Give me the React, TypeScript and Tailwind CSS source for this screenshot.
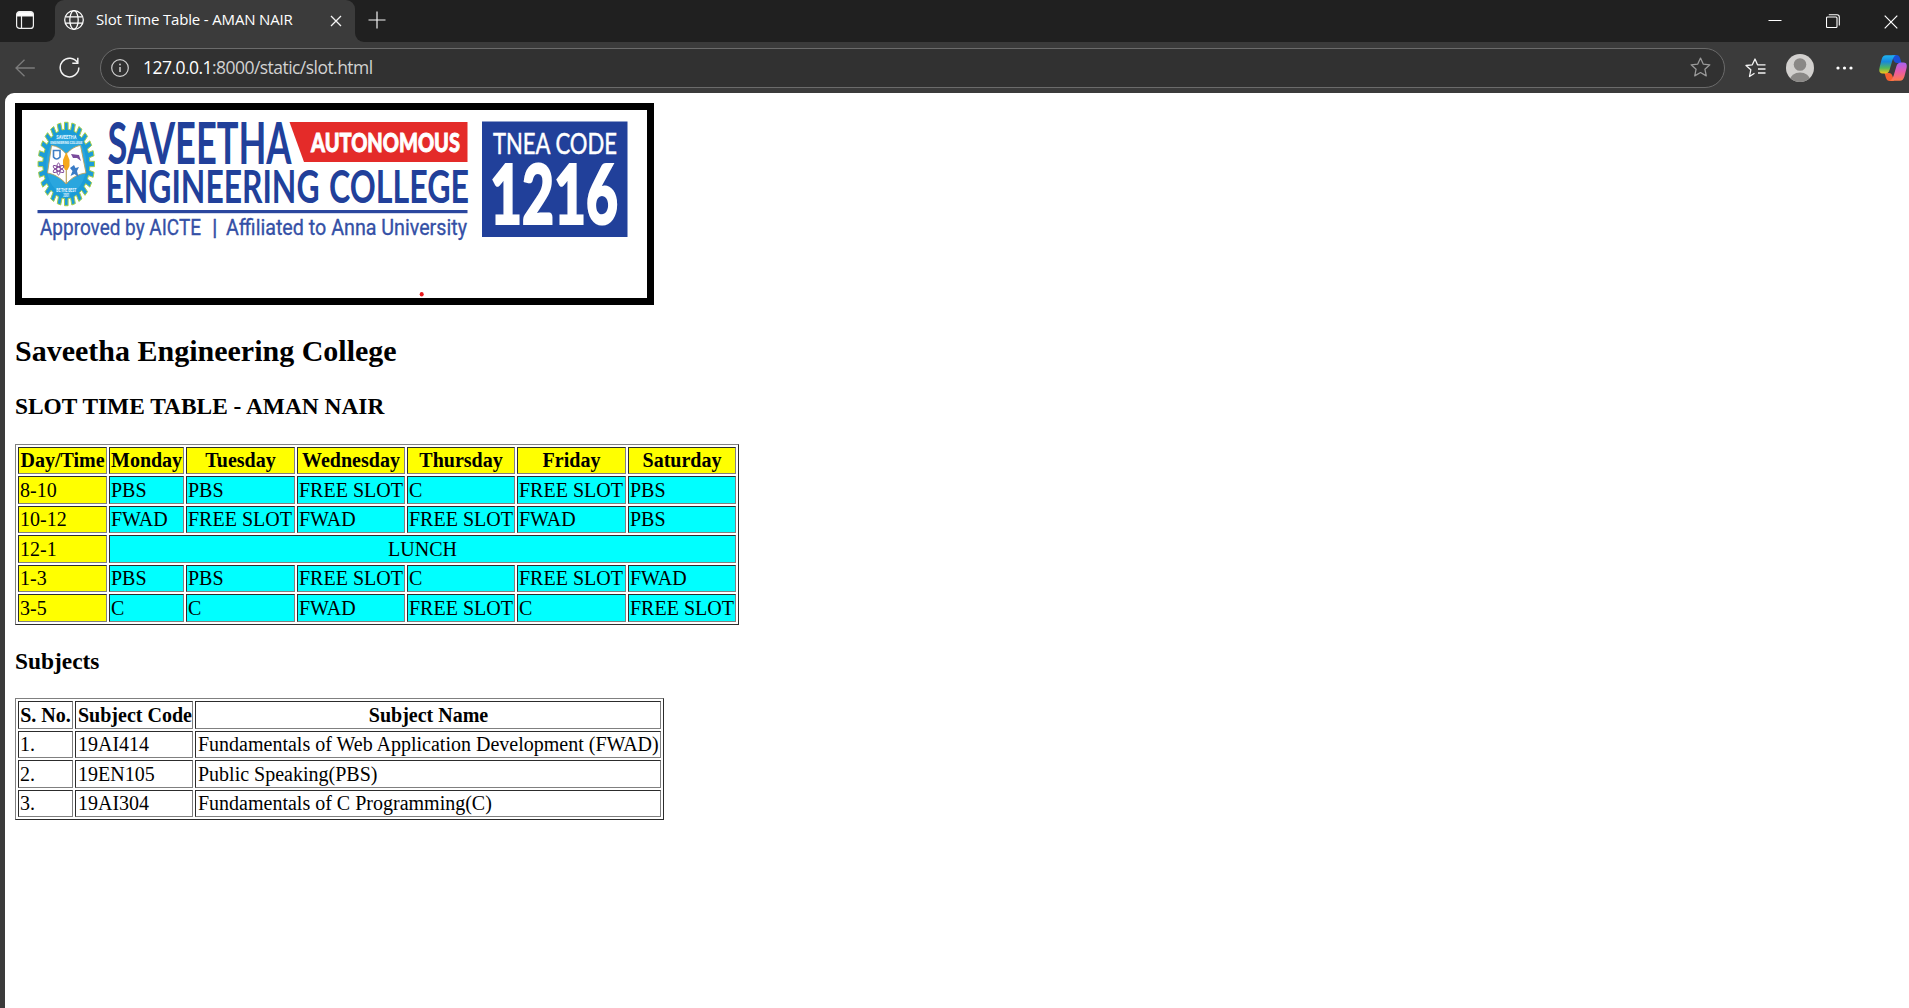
import React from "react";

const SCHEDULE = [
  { time: "8-10", h: "h-[28px]", slots: ["PBS", "PBS", "FREE SLOT", "C", "FREE SLOT", "PBS"] },
  { time: "10-12", h: "h-[27px]", slots: ["FWAD", "FREE SLOT", "FWAD", "FREE SLOT", "FWAD", "PBS"] },
  { time: "12-1", h: "h-[28px]", lunch: true, slots: [] as string[] },
  { time: "1-3", h: "h-[27px]", slots: ["PBS", "PBS", "FREE SLOT", "C", "FREE SLOT", "FWAD"] },
  { time: "3-5", h: "h-[28px]", slots: ["C", "C", "FWAD", "FREE SLOT", "C", "FREE SLOT"] },
];

const DAYS = ["Day/Time", "Monday", "Tuesday", "Wednesday", "Thursday", "Friday", "Saturday"];

const SUBJECTS = [
  { no: "1.", code: "19AI414", name: "Fundamentals of Web Application Development (FWAD)", h: "h-[27px]" },
  { no: "2.", code: "19EN105", name: "Public Speaking(PBS)", h: "h-[28px]" },
  { no: "3.", code: "19AI304", name: "Fundamentals of C Programming(C)", h: "h-[27px]" },
];

const EDGE =
  "border border-t-[#2c2c2c] border-l-[#2c2c2c] border-b-[#808080] border-r-[#808080] py-0 pr-px leading-[25px] whitespace-nowrap";
const CELL = EDGE + " pl-px";
const CELL_WIDE = EDGE + " pl-[2px]";
const TABLE =
  "table-fixed border-separate border-spacing-[2px] border border-t-[#808080] border-l-[#808080] border-b-[#2c2c2c] border-r-[#2c2c2c] text-[20px]";

function gearPath(teeth: number) {
  const pts: string[] = [];
  const step = (Math.PI * 2) / teeth;
  for (let i = 0; i < teeth; i++) {
    const a = i * step - Math.PI / 2;
    const ring: [number, number][] = [
      [-0.3, 0.83],
      [-0.24, 1],
      [0.24, 1],
      [0.3, 0.83],
    ];
    for (const [o, r] of ring) {
      const t = a + o * step;
      pts.push(`${(66.3 + Math.cos(t) * 28.3 * r).toFixed(2)} ${(164 + Math.sin(t) * 41.8 * r).toFixed(2)}`);
    }
  }
  return "M" + pts.join("L") + "Z";
}

function Emblem() {
  return (
    <g>
      <path d={gearPath(24)} fill="#1c9cd8" stroke="#a6cf4a" strokeWidth="1" />
      <ellipse cx="66.3" cy="164" rx="20" ry="30" fill="#2aa6de" />
      <path
        d="M51.5 145.5C57 146 62 149 66.3 154C70.5 149 76 146 80.5 145.5L86 173C78 174 71 178 66.3 184C61 178 54 174 47.5 173Z"
        fill="#fff"
        stroke="#b9a25c"
        strokeWidth="0.9"
      />
      <path d="M66.3 157V184" stroke="#b9a25c" strokeWidth="1.2" />
      <path d="M66.3 152L69.5 160V166L67.5 170H65L63 166V160Z" fill="#f5a81c" />
      <path d="M53.5 150.5V157Q56.5 161 60 157V150.5Z" fill="#fff" stroke="#3f7fc4" strokeWidth="1.6" />
      <path d="M71 154L79 155L81 161L77 158L73 158Z" fill="#7a4b9c" />
      <g fill="none" stroke="#7a3f94" strokeWidth="0.9">
        <ellipse cx="58.5" cy="169" rx="1.8" ry="6" />
        <ellipse cx="58.5" cy="169" rx="1.8" ry="6" transform="rotate(60 58.5 169)" />
        <ellipse cx="58.5" cy="169" rx="1.8" ry="6" transform="rotate(120 58.5 169)" />
      </g>
      <path d="M74 165L75.5 168L79 167L77 171L78.5 177L74.5 174L70.5 176L72.5 171L70 168Z" fill="#3b7cc6" />
      <g fill="#e6f6ff" fontFamily="Roboto, sans-serif" fontWeight="700" textAnchor="middle">
        <text x="66.3" y="138.5" fontSize="5" textLength="20" lengthAdjust="spacingAndGlyphs">SAVEETHA</text>
        <text x="66.3" y="144.3" fontSize="4" textLength="32" lengthAdjust="spacingAndGlyphs">ENGINEERING COLLEGE</text>
        <text x="66.3" y="192" fontSize="4.5" textLength="20" lengthAdjust="spacingAndGlyphs">BE THE BEST</text>
        <text x="66.3" y="197" fontSize="4.5" textLength="6" lengthAdjust="spacingAndGlyphs">2001</text>
      </g>
    </g>
  );
}

function Banner() {
  return (
    <div className="h-[202px] w-[639px] border-[7px] border-black bg-white">
      <svg viewBox="22 110 625 188" className="block h-[188px] w-[625px]">
        <Emblem />
        <g fontFamily="Lato, sans-serif" fontWeight="700" fill="#21409a">
          <text x="107.5" y="163.5" fontSize="57" textLength="184" lengthAdjust="spacingAndGlyphs">SAVEETHA</text>
          <text x="105.5" y="203.3" fontSize="46.5" textLength="214" lengthAdjust="spacingAndGlyphs">ENGINEERING</text>
          <text x="329" y="203.3" fontSize="46.5" textLength="140" lengthAdjust="spacingAndGlyphs">COLLEGE</text>
        </g>
        <path d="M289.5 122H467.5V162H304Z" fill="#e42b29" />
        <text x="311" y="151.5" fontFamily="Lato, sans-serif" fontSize="27" fontWeight="900" fill="#fff" stroke="#fff" strokeWidth="0.9" textLength="149" lengthAdjust="spacingAndGlyphs">AUTONOMOUS</text>
        <rect x="37.5" y="210" width="430" height="3.2" fill="#2b479f" />
        <g fontFamily="Roboto, sans-serif" fontSize="22.5" fill="#3450a6" stroke="#3450a6" strokeWidth="0.35">
          <text x="40" y="234.5" textLength="161" lengthAdjust="spacingAndGlyphs">Approved by AICTE</text>
          <text x="212" y="234.5">|</text>
          <text x="226" y="234.5" textLength="241" lengthAdjust="spacingAndGlyphs">Affiliated to Anna University</text>
        </g>
        <rect x="482" y="121.5" width="145.5" height="115.5" fill="#21409a" />
        <text x="493" y="153.5" fontFamily="Lato, sans-serif" fontSize="28" fill="#fff" stroke="#fff" strokeWidth="0.5" textLength="124" lengthAdjust="spacingAndGlyphs">TNEA CODE</text>
        <text x="490" y="223.8" fontFamily="Lato, sans-serif" fontSize="82" fontWeight="900" fill="#fff" stroke="#fff" strokeWidth="2.2" textLength="128" lengthAdjust="spacingAndGlyphs">1216</text>
        <ellipse cx="421.7" cy="294.3" rx="2" ry="2.3" fill="#e8191c" />
      </svg>
    </div>
  );
}

function TabBar() {
  return (
    <div className="flex h-[42px] bg-[#3b3b3b]">
      <div className="flex w-[55px] items-center rounded-br-[9px] bg-[#202020] pl-[16px]">
        <svg viewBox="0 0 18 18" className="-mt-[2px] h-[18px] w-[18px]" fill="none" stroke="#f0f0f0">
          <rect x="0.6" y="0.6" width="16.8" height="16.8" rx="3" strokeWidth="1.2" />
          <path d="M1 4V3.5Q1 1 3.5 1H14.5Q17 1 17 3.5V5H1Z" fill="#fff" />
          <path d="M5.500 5V17" strokeWidth="1.2" />
        </svg>
      </div>
      <div className="bg-[#202020]">
        <div className="flex h-[42px] w-[300px] items-center rounded-t-[9px] bg-[#3b3b3b] pb-[2px] pl-[9px]">
          <svg viewBox="0 0 20 20" className="h-[20px] w-[20px] shrink-0" fill="none" stroke="#fff" strokeWidth="1.25">
            <circle cx="10" cy="10" r="9.3" />
            <ellipse cx="10" cy="10" rx="4.2" ry="9.3" />
            <path d="M1.4 6.8H18.6M1.4 13.2H18.6" />
          </svg>
          <span className="ml-[12px] w-[200px] whitespace-nowrap pb-[2px] font-['Open_Sans','Noto_Sans',sans-serif] text-[15px] tracking-[-0.16px] text-white">
            Slot Time Table - AMAN NAIR
          </span>
          <svg viewBox="0 0 12 12" className="ml-[34px] mt-[1px] h-[12px] w-[12px]" stroke="#f4f4f4" strokeWidth="1.3">
            <path d="M1 1L11 11M11 1L1 11" />
          </svg>
        </div>
      </div>
      <div className="flex flex-1 items-center rounded-bl-[9px] bg-[#202020] pb-[2px] pl-[13px]">
        <svg viewBox="0 0 18 18" className="h-[18px] w-[18px]" stroke="#f4f4f4" strokeWidth="1.2">
          <path d="M9 0.5V17.5M0.5 9H17.5" />
        </svg>
        <div className="ml-auto flex items-center pr-[11px]">
          <svg viewBox="0 0 14 14" className="mt-[2px] h-[14px] w-[14px]" stroke="#fff">
            <path d="M0.5 6.5H13.5" />
          </svg>
          <svg viewBox="0 0 14 14" className="ml-[44px] mt-[2px] h-[14px] w-[14px]" fill="none" stroke="#fff" strokeWidth="1.1">
            <rect x="0.5" y="3" width="10.5" height="10.5" rx="1" />
            <path d="M2.8 0.7H11Q13.3 0.7 13.3 3V11.5" />
          </svg>
          <svg viewBox="0 0 14 14" className="ml-[44px] mt-[3px] h-[14px] w-[14px]" stroke="#fff" strokeWidth="1.2">
            <path d="M0.7 0.7L13.3 13.3M13.3 0.7L0.7 13.3" />
          </svg>
        </div>
      </div>
    </div>
  );
}

function Copilot() {
  return (
    <svg viewBox="0 0 28 26" className="ml-[26px] h-[26px] w-[28px] shrink-0">
      <defs>
        <linearGradient id="cpA" x1="0" y1="0" x2="0" y2="1">
          <stop offset="0" stopColor="#1fb4f0" />
          <stop offset="0.35" stopColor="#1787dc" />
          <stop offset="0.7" stopColor="#52b85a" />
          <stop offset="1" stopColor="#f5c518" />
        </linearGradient>
        <linearGradient id="cpB" x1="0" y1="0" x2="0" y2="1">
          <stop offset="0" stopColor="#a763f0" />
          <stop offset="0.5" stopColor="#e85aa8" />
          <stop offset="1" stopColor="#ff7a4a" />
        </linearGradient>
      </defs>
      <path d="M13 0H17.5Q20 0 21 3L22.5 8H18Q15.5 8 14.5 5Z" fill="#1b4fd6" />
      <path d="M15 26H10.5Q8 26 7 23L5.5 18H10Q12.5 18 13.5 21Z" fill="#f4602f" />
      <path d="M7 0.3H17Q14.8 1 13.5 5L10.5 15Q9.5 18.5 6 18.5H3.5Q-1 18.5 0.7 12L2.6 4.5Q3.8 0.3 7 0.3Z" fill="url(#cpA)" />
      <path d="M21 25.7H11Q13.2 25 14.5 21L17.5 11Q18.5 7.5 22 7.5H24.5Q29 7.5 27.3 14L25.4 21.5Q24.2 25.7 21 25.7Z" fill="url(#cpB)" />
    </svg>
  );
}

const STAR = "M10 1L12.6 6.7L18.9 7.4L14.2 11.6L15.5 18L10 14.8L4.5 18L5.8 11.6L1.1 7.4L7.4 6.7Z";

function Toolbar() {
  return (
    <div className="flex h-[51px] items-center bg-[#3b3b3b]">
      <svg viewBox="0 0 20 18" className="ml-[15px] h-[18px] w-[20px]" fill="none" stroke="#7c7c7c" strokeWidth="1.3">
        <path d="M19.8 9H1M9.5 0.7L1 9L9.5 17.3" />
      </svg>
      <svg viewBox="0 0 21 21" className="ml-[24px] mr-px h-[21px] w-[21px]" fill="none" stroke="#f4f4f4" strokeWidth="1.5">
        <path d="M18.6 6A9.3 9.3 0 1 0 19.8 10.5" />
        <path d="M18.8 0.8V6.3H13.3" />
      </svg>
      <div className="ml-[19px] flex h-[40px] w-[1625px] items-center rounded-full border border-[#6b6b6b] bg-[#313131] pl-[10px] pr-[13px]">
        <svg viewBox="0 0 18 18" className="h-[18px] w-[18px]" fill="none" stroke="#d0d0d0" strokeWidth="1.2">
          <circle cx="9" cy="9" r="8.3" />
          <path d="M9 8V13" strokeWidth="1.5" />
          <circle cx="9" cy="5.5" r="0.9" fill="#d0d0d0" stroke="none" />
        </svg>
        <span className="ml-[14px] whitespace-nowrap pb-px font-['Open_Sans','Noto_Sans',sans-serif] text-[17.5px] tracking-[-0.54px] text-[#d2d2d2]">
          <span className="text-white">127.0.0.1</span>:8000/static/slot.html
        </span>
        <svg viewBox="0 0 20 20" className="ml-auto h-[21px] w-[21px]" fill="none" stroke="#9a9a9a" strokeWidth="1.2" strokeLinejoin="round">
          <path d={STAR} />
        </svg>
      </div>
      <svg viewBox="0 0 21 20" className="ml-[20px] h-[20px] w-[21px]" fill="none" stroke="#f4f4f4" strokeWidth="1.3" strokeLinejoin="round">
        <path d="M9.5 15.2L4.5 18.5L5.8 11.8L1 7.5L7.3 6.8L10 1L12.5 6.8H20.5M13 11H20.5M13 15H20.5" />
      </svg>
      <svg viewBox="0 0 28 28" className="ml-[20px] h-[28px] w-[28px]">
        <defs>
          <clipPath id="avatar"><circle cx="14" cy="14" r="14" /></clipPath>
        </defs>
        <g clipPath="url(#avatar)">
          <rect width="28" height="28" fill="#d2d0ce" />
          <circle cx="14" cy="10.5" r="6.3" fill="#8a8886" />
          <ellipse cx="14" cy="26" rx="10" ry="7.5" fill="#8a8886" />
        </g>
      </svg>
      <svg viewBox="0 0 17 4" className="ml-[22px] h-[4px] w-[17px]" fill="#fff">
        <circle cx="2" cy="2" r="1.6" />
        <circle cx="8.5" cy="2" r="1.6" />
        <circle cx="15" cy="2" r="1.6" />
      </svg>
      <Copilot />
    </div>
  );
}

export default function App() {
  return (
    <div className="flex h-[1008px] w-[1909px] flex-col overflow-hidden bg-[#3b3b3b]">
      <TabBar />
      <Toolbar />
      <main className="ml-[5px] flex-1 rounded-tl-[9px] bg-white pl-[10px] pt-[10px] font-['Liberation_Serif',serif] text-black">
        <Banner />
        <h2 className="mt-[28px] text-[30px] leading-[35px] font-bold">Saveetha Engineering College</h2>
        <h3 className="mt-[25px] text-[23.4px] leading-[27px] font-bold">SLOT TIME TABLE - AMAN NAIR</h3>
        <table className={TABLE + " mt-[24px] w-[724px]"}>
          <colgroup>
            <col className="w-[89px]" />
            <col className="w-[75px]" />
            <col className="w-[109px]" />
            <col className="w-[108px]" />
            <col className="w-[108px]" />
            <col className="w-[109px]" />
            <col className="w-[108px]" />
          </colgroup>
          <tbody>
            <tr className="h-[27px] bg-[#ffff00]">
              {DAYS.map((d) => (
                <th key={d} className={CELL + " text-center font-bold"}>{d}</th>
              ))}
            </tr>
            {SCHEDULE.map((row) => (
              <tr key={row.time} className={row.h + " bg-[#00ffff]"}>
                <td className={CELL + " bg-[#ffff00]"}>{row.time}</td>
                {row.lunch ? (
                  <td colSpan={6} className={CELL + " text-center"}>LUNCH</td>
                ) : (
                  row.slots.map((s, i) => <td key={i} className={CELL}>{s}</td>)
                )}
              </tr>
            ))}
          </tbody>
        </table>
        <h3 className="mt-[23px] text-[23.4px] leading-[27px] font-bold">Subjects</h3>
        <table className={TABLE + " mt-[23px] w-[649px]"}>
          <colgroup>
            <col className="w-[55px]" />
            <col className="w-[118px]" />
            <col className="w-[466px]" />
          </colgroup>
          <tbody>
            <tr className="h-[28px]">
              <th className={CELL}>S. No.</th>
              <th className={CELL_WIDE}>Subject Code</th>
              <th className={CELL_WIDE}>Subject Name</th>
            </tr>
            {SUBJECTS.map((s) => (
              <tr key={s.no} className={s.h}>
                <td className={CELL}>{s.no}</td>
                <td className={CELL_WIDE}>{s.code}</td>
                <td className={CELL_WIDE}>{s.name}</td>
              </tr>
            ))}
          </tbody>
        </table>
      </main>
    </div>
  );
}
